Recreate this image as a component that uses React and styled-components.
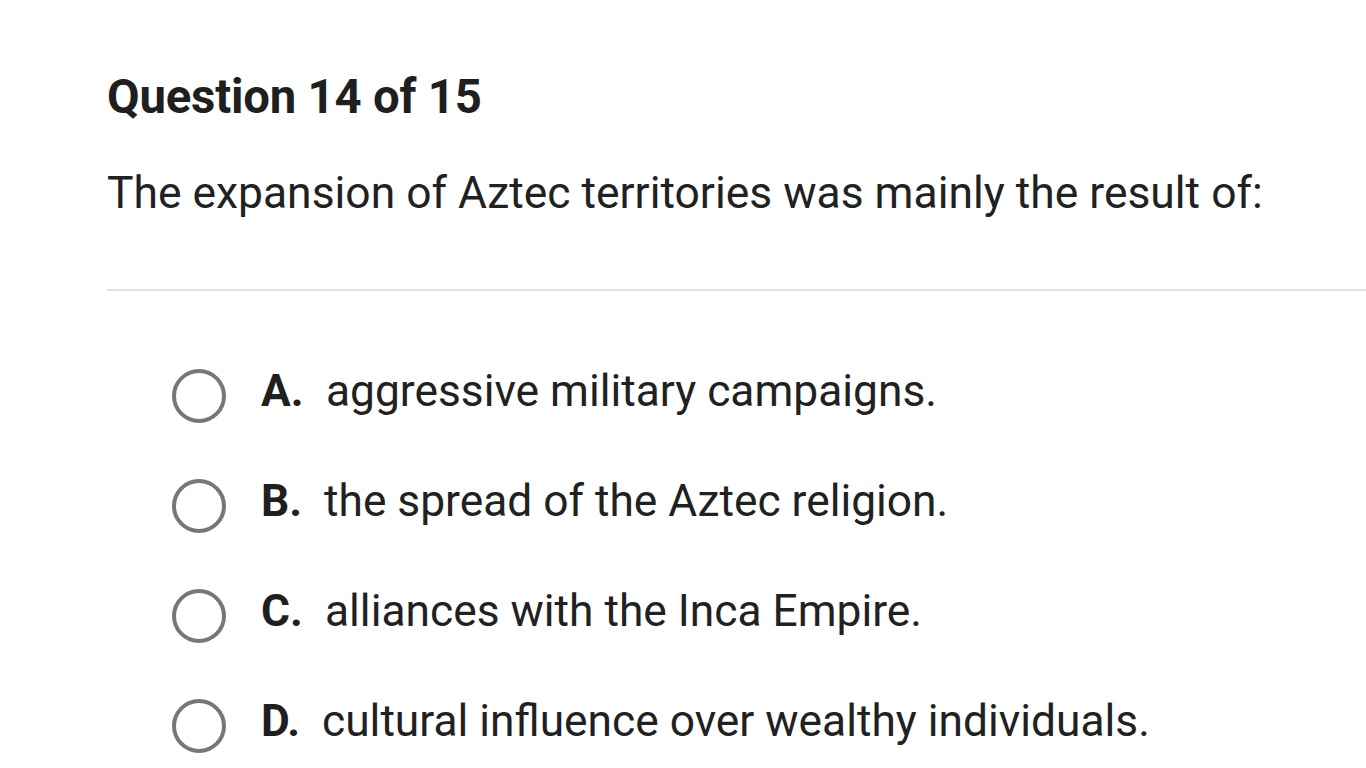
import React from "react";
import styled, { createGlobalStyle } from "styled-components";

const Global = createGlobalStyle`
  html, body { margin: 0; padding: 0; background: #fff; }
  body { font-family: Roboto, "Liberation Sans", sans-serif; color: #212121; overflow: hidden; }
`;

const Page = styled.div`
  padding: 67px 0 0 107px;
`;

const Title = styled.h1`
  margin: 0;
  font-size: 47.3px;
  font-weight: 700;
  letter-spacing: -0.2px;
  line-height: 60px;
  color: #1f1f1f;
`;

const Prompt = styled.p`
  margin: 36px 0 0;
  font-size: 44.4px;
  font-weight: 400;
  line-height: 60px;
  color: #212121;
`;

const Divider = styled.hr`
  margin: 66px 0 0;
  border: 0;
  height: 2px;
  background: #e3e3e3;
`;

const Options = styled.div`
  display: flex;
  flex-direction: column;
  gap: 56px;
  margin-top: 78px;
  padding-left: 65px;
`;

const Option = styled.label`
  display: flex;
  align-items: center;
  height: 54px;
  font-size: 44.3px;
  cursor: pointer;
`;

const Radio = styled.span`
  box-sizing: border-box;
  width: 54px;
  height: 54px;
  border-radius: 50%;
  border: 4.5px solid #777;
  flex: none;
`;

const Label = styled.span`
  display: flex;
  align-items: baseline;
  margin-bottom: 10px;
  margin-left: 35px;
`;

const Letter = styled.b`
  font-weight: 700;
  width: ${(p) => p.w}px;
  flex: none;
  color: #1f1f1f;
`;

const Text = styled.span`
  font-weight: 400;
  white-space: nowrap;
`;

const options = [
  ["A.", "aggressive military campaigns.", 65],
  ["B.", "the spread of the Aztec religion.", 63],
  ["C.", "alliances with the Inca Empire.", 64],
  ["D.", "cultural influence over wealthy individuals.", 61],
];

export default function App() {
  return (
    <>
      <Global />
      <Page>
        <Title>Question 14 of 15</Title>
        <Prompt>The expansion of Aztec territories was mainly the result of:</Prompt>
        <Divider />
        <Options>
          {options.map(([l, t, w]) => (
            <Option key={l}>
              <Radio />
              <Label>
                <Letter w={w}>{l}</Letter>
                <Text>{t}</Text>
              </Label>
            </Option>
          ))}
        </Options>
      </Page>
    </>
  );
}
